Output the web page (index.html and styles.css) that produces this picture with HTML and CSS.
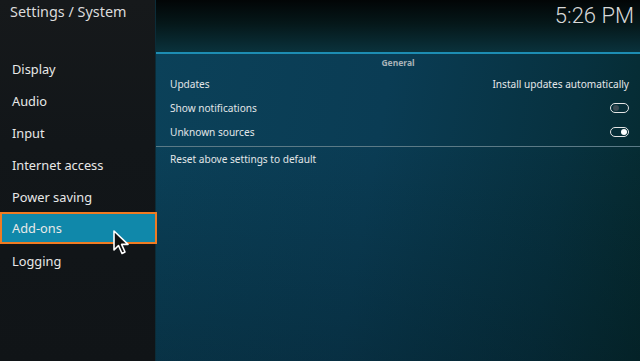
FILE: index.html
```html
<!DOCTYPE html>
<html lang="en">
<head>
    <meta charset="UTF-8">
    <title>Settings / System</title>
    <link rel="stylesheet" href="styles.css">
</head>
<body>
    <div class="screen">
        <aside class="sidebar">
            <div class="sidebar-title">Settings / System</div>
            <ul class="menu">
                <li>Display</li>
                <li>Audio</li>
                <li>Input</li>
                <li>Internet access</li>
                <li>Power saving</li>
                <li class="active">Add-ons
                    <svg class="cursor" width="18" height="26" viewBox="0 0 18 26">
                        <path d="M1 1 L1 20 L5.5 15.5 L9 23.5 L12 22 L8.6 14.4 L15 14.4 Z" fill="#111" stroke="#fff" stroke-width="1.6" stroke-linejoin="round"/>
                    </svg>
                </li>
                <li>Logging</li>
            </ul>
        </aside>

        <main class="content">
            <header class="topbar">
                <div class="clock">5:26 PM</div>
            </header>

            <div class="group-label">General</div>
            <div class="row">
                <span>Updates</span>
                <span class="value">Install updates automatically</span>
            </div>
            <div class="row">
                <span>Show notifications</span>
                <span class="toggle"></span>
            </div>
            <div class="row">
                <span>Unknown sources</span>
                <span class="toggle on"></span>
            </div>
            <div class="row reset">
                <span>Reset above settings to default</span>
            </div>
        </main>
    </div>
</body>
</html>
```

FILE: styles.css
```css
html, body {
    margin: 0;
    padding: 0;
    width: 640px;
    height: 361px;
    overflow: hidden;
    font-family: 'Noto Sans', 'Open Sans', sans-serif;
    color: #e6e6e6;
    background: #0b0e10;
}

.screen {
    display: flex;
    height: 361px;
}

.sidebar {
    width: 156px;
    flex-shrink: 0;
    background: linear-gradient(180deg, #16191b 0%, #121619 40%, #101417 100%);
    border-right: 1px solid #0b2c38;
    box-sizing: border-box;
}

.sidebar-title {
    height: 54px;
    padding: 2px 0 0 10px;
    box-sizing: border-box;
    font-size: 14.4px;
    color: #dcdcdc;
}

.menu {
    list-style: none;
    margin: 0;
    padding: 0;
}

.menu li {
    position: relative;
    height: 32px;
    line-height: 31px;
    padding-left: 12px;
    font-size: 12.8px;
    color: #e8e8e8;
}

.menu li.active {
    width: 157px;
    box-sizing: border-box;
    margin-top: -2px;
    margin-bottom: 2px;
    padding-left: 10px;
    background: #1088aa;
    border: 2px solid #f07b22;
    line-height: 28px;
}

.cursor {
    position: absolute;
    left: 111px;
    top: 16px;
}

.content {
    flex: 1;
    background:
        linear-gradient(180deg, rgba(0, 0, 0, 0) 40%, rgba(2, 18, 26, 0.3) 100%),
        linear-gradient(100deg, #0b4159 0%, #0a3c54 45%, #07313f 80%, #05292d 100%);
}

.topbar {
    height: 52px;
    border-bottom: 2px solid #1d8db3;
    background: linear-gradient(180deg, #020506 0%, #051719 45%, #0a323c 100%);
    display: flex;
    justify-content: flex-end;
}

.clock {
    padding: 3px 6px 0 0;
    font-family: Roboto, 'Noto Sans', sans-serif;
    font-weight: 300;
    font-size: 22px;
    color: #d8d8d8;
}

.group-label {
    height: 18px;
    padding-top: 3px;
    text-align: center;
    font-size: 8.5px;
    font-weight: bold;
    color: #a9b3b8;
    box-sizing: border-box;
}

.row {
    display: flex;
    justify-content: space-between;
    align-items: center;
    height: 24px;
    padding: 0 11px 0 14px;
    font-size: 10.1px;
    color: #e2e6e8;
}

.row.reset {
    height: 23px;
    margin-top: 2px;
    border-top: 1px solid #5b7a86;
}

.value {
    color: #e6e8ea;
}

.toggle {
    position: relative;
    width: 17px;
    height: 8px;
    border: 1.5px solid #e4e4e4;
    border-radius: 6px;
}

.toggle::after {
    content: "";
    position: absolute;
    top: 1px;
    left: 2px;
    width: 6px;
    height: 6px;
    border-radius: 50%;
    background: #3b4a52;
}

.toggle.on::after {
    left: auto;
    right: 1px;
    background: #ffffff;
}
```
